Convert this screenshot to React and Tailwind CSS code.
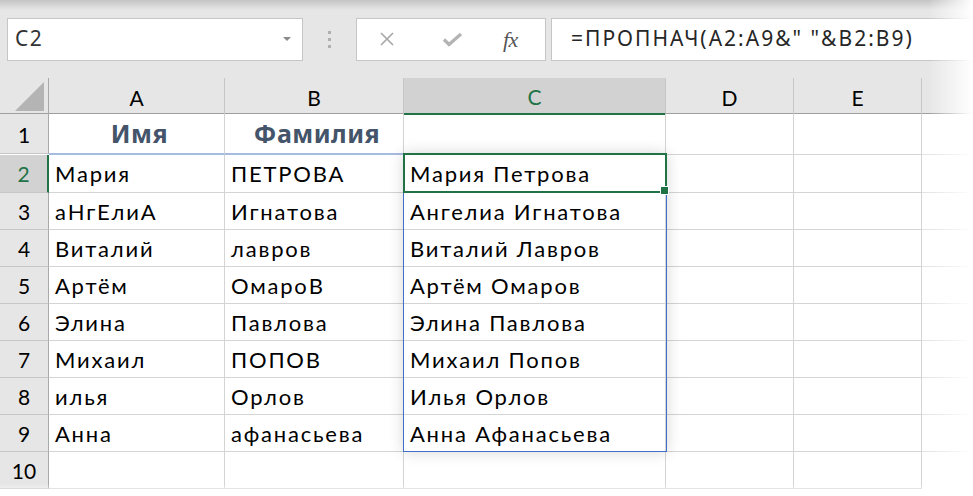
const cols = ["A", "B", "C", "D", "E"];

const rows = [
  ["Мария", "ПЕТРОВА", "Мария Петрова"],
  ["аНгЕлиА", "Игнатова", "Ангелиа Игнатова"],
  ["Виталий", "лавров", "Виталий Лавров"],
  ["Артём", "ОмароВ", "Артём Омаров"],
  ["Элина", "Павлова", "Элина Павлова"],
  ["Михаил", "ПОПОВ", "Михаил Попов"],
  ["илья", "Орлов", "Илья Орлов"],
  ["Анна", "афанасьева", "Анна Афанасьева"],
];

const grid = "grid grid-cols-[49px_176px_179px_262px_128px_128px_51px]";
const cell = "border-r border-b border-[#d4d4d4] flex items-center pl-[6px] pt-[1px] whitespace-nowrap";

function Toolbar() {
  return (
    <div className="h-[78px] bg-[#e6e6e6] flex items-center pl-[7px] font-['Noto_Sans',sans-serif]">
      <div className="w-[296px] h-[43px] bg-white border border-[#c6c6c6] flex items-center justify-between pl-[7px] pr-[11px]">
        <span className="text-[21px] tracking-[1.5px] text-[#333]">C2</span>
        <svg width="8" height="4" viewBox="0 0 8 4">
          <path d="M0 0h8L4 4z" fill="#8a8a8a" />
        </svg>
      </div>
      <div className="ml-[25px] flex flex-col gap-[4px]">
        <span className="w-[3px] h-[3px] bg-[#b0b0b0]" />
        <span className="w-[3px] h-[3px] bg-[#b0b0b0]" />
        <span className="w-[3px] h-[3px] bg-[#b0b0b0]" />
      </div>
      <div className="ml-[25px] w-[190px] h-[43px] bg-white border border-[#c6c6c6] flex items-center">
        <svg className="ml-[22px]" width="16" height="16" viewBox="0 0 16 16">
          <path d="M2 2l12 12M14 2L2 14" stroke="#a6a6a6" strokeWidth="1.6" />
        </svg>
        <svg className="ml-[47px]" width="21" height="16" viewBox="0 0 21 16">
          <path d="M2 8.5l5 5L19 3" stroke="#b3b3b3" strokeWidth="3.2" fill="none" />
        </svg>
        <span className="ml-[40px] font-['Liberation_Serif',serif] italic text-[22px] text-[#555] tracking-[-0.5px]">fx</span>
      </div>
      <div className="ml-[5px] flex-1 h-[43px] bg-white border border-[#c6c6c6] flex items-center pl-[19px]">
        <span className="text-[21px] tracking-[2px] text-[#262626] whitespace-nowrap">=ПРОПНАЧ(A2:A9&amp;" "&amp;B2:B9)</span>
      </div>
    </div>
  );
}

function Header() {
  return (
    <div className={`${grid} h-[36px] bg-[#e6e6e6] border-b border-[#9e9e9e] text-[21px] text-black`}>
      <div className="border-r border-[#a9a9a9] flex items-end justify-end pr-[4px] pb-[3px]">
        <svg width="29" height="29" viewBox="0 0 29 29">
          <path d="M29 0V29H0z" fill="#b4b4b4" />
        </svg>
      </div>
      {cols.map((c) => (
        <div
          key={c}
          className={
            c === "C"
              ? "bg-[#d2d2d2] text-[#217346] border-r border-[#c6c6c6] border-b-2 border-b-[#217346] -mb-px flex items-center justify-center pt-[3px]"
              : "border-r border-[#c6c6c6] flex items-center justify-center pt-[3px]"
          }
        >
          {c}
        </div>
      ))}
      <div />
    </div>
  );
}

function RowHead({ n, active, h }) {
  return (
    <div
      className={
        active
          ? `${h} bg-[#d2d2d2] text-[#217346] border-b border-[#c6c6c6] border-r-2 border-r-[#217346] flex items-center justify-center pt-[2px]`
          : `${h} bg-[#e6e6e6] text-black border-b border-[#c6c6c6] border-r border-r-[#a9a9a9] flex items-center justify-center pt-[2px]`
      }
    >
      {n}
    </div>
  );
}

export default function App() {
  return (
    <div className="relative w-[973px] h-[496px] overflow-hidden bg-white font-['Lato','Noto_Sans',sans-serif]">
      <Toolbar />
      <Header />
      <div className="text-[22px] text-black">
        <div className={grid}>
          <RowHead n={1} h="h-[40px] text-[21px]" />
          <div className={`${cell} justify-center pl-0 border-b-2 border-b-[#a6bbe0] font-['Noto_Sans',sans-serif] font-bold text-[25px] tracking-[0.5px] text-[#44546a]`}>Имя</div>
          <div className={`${cell} justify-center pl-0 border-b-2 border-b-[#a6bbe0] font-['Noto_Sans',sans-serif] font-bold text-[25px] tracking-[0.5px] text-[#44546a]`}>Фамилия</div>
          <div className={cell} />
          <div className={cell} />
          <div className={cell} />
          <div className="border-b border-[#e4e4e4]" />
        </div>
        {rows.map((r, i) => (
          <div key={i} className={grid}>
            <RowHead n={i + 2} active={i === 0} h={i === 0 ? "h-[38px] text-[21px]" : "h-[37px] text-[21px]"} />
            <div className={`${cell} tracking-[1.8px]`}>{r[0]}</div>
            <div className={`${cell} tracking-[1.8px]`}>{r[1]}</div>
            <div className={`${cell} tracking-[1.8px]`}>{r[2]}</div>
            <div className={cell} />
            <div className={cell} />
            <div className="border-b border-[#e4e4e4]" />
          </div>
        ))}
        <div className={grid}>
          <RowHead n={10} h="h-[37px] text-[21px]" />
          <div className={cell} />
          <div className={cell} />
          <div className={cell} />
          <div className={cell} />
          <div className={cell} />
          <div />
        </div>
      </div>

      {/* spill range C2:C9 */}
      <div className="absolute left-[403px] top-[153px] w-[264px] h-[299px] border border-[#3f6fc6] shadow-[0_0_14px_rgba(0,0,0,0.16)] pointer-events-none" />
      {/* active cell C2 */}
      <div className="absolute left-[403px] top-[153px] w-[264px] h-[40px] border-2 border-[#217346] pointer-events-none" />
      <div className="absolute left-[660px] top-[186px] w-[9px] h-[9px] bg-[#217346] border border-white pointer-events-none" />

      {/* torn edge fades */}
      <div className="absolute inset-x-0 top-0 h-[10px] bg-gradient-to-b from-[#c4c4c4] to-transparent pointer-events-none" />
      <div className="absolute top-0 right-0 h-full w-[45px] bg-gradient-to-r from-transparent to-white pointer-events-none" />
      <div className="absolute bottom-0 left-0 w-full h-[12px] bg-gradient-to-b from-transparent to-white pointer-events-none" />
    </div>
  );
}
